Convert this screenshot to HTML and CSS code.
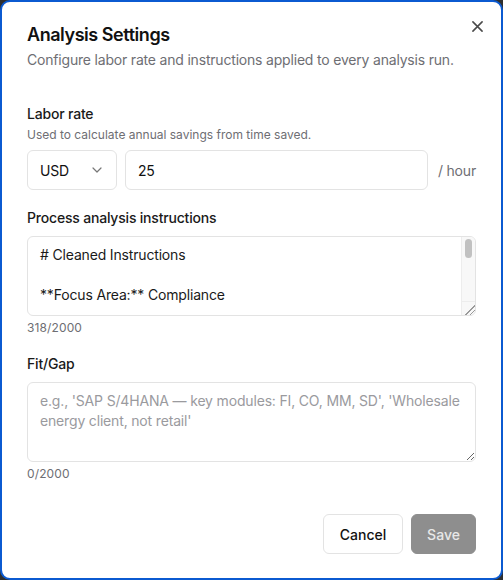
FILE: index.html
```html
<!DOCTYPE html>
<html>
<head>
<meta charset="utf-8">
<link rel="stylesheet" href="styles.css">
</head>
<body>
<div class="dialog">
  <button class="close" aria-label="Close">
    <svg width="12" height="12" viewBox="0 0 12 12"><path d="M1 1 L11 11 M11 1 L1 11" stroke="#4a4a4a" stroke-width="1.7" stroke-linecap="round" fill="none"/></svg>
  </button>
  <h1 class="title">Analysis Settings</h1>
  <p class="subtitle">Configure labor rate and instructions applied to every analysis run.</p>

  <section class="field first">
    <div class="label">Labor rate</div>
    <div class="help">Used to calculate annual savings from time saved.</div>
    <div class="rate-row">
      <div class="select">
        <span>USD</span>
        <svg width="10" height="6" viewBox="0 0 10 6"><path d="M1 1 L5 5 L9 1" stroke="#777" stroke-width="1.2" fill="none" stroke-linecap="round" stroke-linejoin="round"/></svg>
      </div>
      <div class="input">25</div>
      <span class="unit">/ hour</span>
    </div>
  </section>

  <section class="field second">
    <div class="label label-gap">Process analysis instructions</div>
    <div class="area-wrap">
      <textarea class="area scroll"># Cleaned Instructions

**Focus Area:** Compliance

Review each process step for compliance risks, manual controls, and approval bottlenecks. Highlight where automation could reduce audit effort and errors. Prioritize steps with high volume, repeated data entry, or regulatory reporting.</textarea>
      <div class="fake-scroll" aria-hidden="true">
        <div class="fake-track"><div class="fake-thumb"></div></div>
        <div class="fake-corner"></div>
      </div>
    </div>
    <div class="count">318/2000</div>
  </section>

  <section class="field fitgap">
    <div class="label label-gap">Fit/Gap</div>
    <textarea class="area" placeholder="e.g., 'SAP S/4HANA — key modules: FI, CO, MM, SD', 'Wholesale energy client, not retail'"></textarea>
    <div class="count">0/2000</div>
  </section>

  <div class="actions">
    <button class="btn cancel">Cancel</button>
    <button class="btn save">Save</button>
  </div>
</div>
</body>
</html>
```

FILE: styles.css
```css
* { box-sizing: border-box; }
html, body {
  margin: 0;
  padding: 0;
  background: #2e2e2e;
  font-family: Inter, "Noto Sans", sans-serif;
}
.dialog {
  position: relative;
  width: 503px;
  height: 580px;
  background: #fff;
  border: 2px solid #0b5ad1;
  border-radius: 10px;
  padding: 19px 25px 24px 25px;
  display: flex;
  flex-direction: column;
  letter-spacing: -0.012em;
}
.close {
  position: absolute;
  top: 16px;
  right: 16px;
  width: 16px;
  height: 16px;
  padding: 0;
  border: 0;
  background: transparent;
  display: flex;
  align-items: center;
  justify-content: center;
}
.close svg { width: 11px; height: 11px; }
.title {
  margin: 0;
  font-size: 18px;
  line-height: 28px;
  font-weight: 600;
  color: #111;
  letter-spacing: -0.025em;
}
.subtitle {
  margin: 1px 0 0 0;
  font-size: 14px;
  line-height: 20px;
  color: #6e6e73;
}
.field { display: flex; flex-direction: column; }
.field.first { margin-top: 34px; }
.field.second { margin-top: 18px; }
.field.fitgap { margin-top: 18px; }
.label {
  font-size: 14px;
  line-height: 20px;
  font-weight: 500;
  color: #1a1a1a;
}
.label-gap { margin-bottom: 8px; }
.help {
  margin-top: 3px;
  font-size: 12px;
  line-height: 16px;
  color: #6e6e73;
  letter-spacing: 0;
}
.rate-row {
  margin-top: 7px;
  display: flex;
  align-items: center;
  gap: 8px;
}
.select {
  width: 90px;
  height: 40px;
  border: 1px solid #e3e3e3;
  border-radius: 6px;
  padding: 0 14px 0 12px;
  display: flex;
  align-items: center;
  justify-content: space-between;
  font-size: 14px;
  color: #111;
}
.input {
  flex: 1;
  height: 40px;
  border: 1px solid #e3e3e3;
  border-radius: 6px;
  padding: 0 12px;
  display: flex;
  align-items: center;
  font-size: 14px;
  color: #111;
}
.unit {
  margin-left: 2px;
  font-size: 14px;
  color: #6e6e73;
}
.area-wrap { position: relative; }
.area {
  display: block;
  width: 100%;
  height: 80px;
  margin: 0;
  border: 1px solid #e3e3e3;
  border-radius: 6px;
  padding: 8px 12px;
  font-family: Inter, "Noto Sans", sans-serif;
  font-size: 14px;
  line-height: 20px;
  letter-spacing: -0.012em;
  color: #1a1a1a;
  resize: vertical;
  outline: none;
}
.area.scroll { padding-right: 26px; overflow: hidden; }
.area::placeholder { color: #9a9a9e; }
.fake-scroll {
  position: absolute;
  top: 1px;
  right: 1px;
  bottom: 1px;
  width: 14px;
  display: flex;
  flex-direction: column;
  background: #f8f8f8;
  border-left: 1px solid #ededed;
  border-radius: 0 5px 5px 0;
  pointer-events: none;
}
.fake-track {
  flex: 1;
  padding: 2px 3px 0 3px;
}
.fake-thumb {
  height: 19px;
  background: #c1c1c1;
  border-radius: 4px;
}
.fake-corner {
  height: 14px;
  border-top: 1px solid #ededed;
  background:
    linear-gradient(135deg, transparent 60%, #9a9a9a 60%, #9a9a9a 66%, transparent 66%, transparent 78%, #9a9a9a 78%, #9a9a9a 84%, transparent 84%);
}
.count {
  margin-top: 4px;
  font-size: 12px;
  line-height: 16px;
  color: #6e6e73;
  letter-spacing: 0.01em;
}
.actions {
  margin-top: auto;
  display: flex;
  justify-content: flex-end;
  gap: 8px;
}
.btn {
  height: 40px;
  border-radius: 6px;
  font-family: Inter, "Noto Sans", sans-serif;
  font-size: 14px;
  font-weight: 500;
  padding: 0 12px;
}
.cancel {
  width: 80px;
  background: #fff;
  border: 1px solid #e3e3e3;
  color: #111;
}
.save {
  width: 65px;
  background: #8e8e8e;
  border: 1px solid #8e8e8e;
  color: #e8e8e8;
}
```
